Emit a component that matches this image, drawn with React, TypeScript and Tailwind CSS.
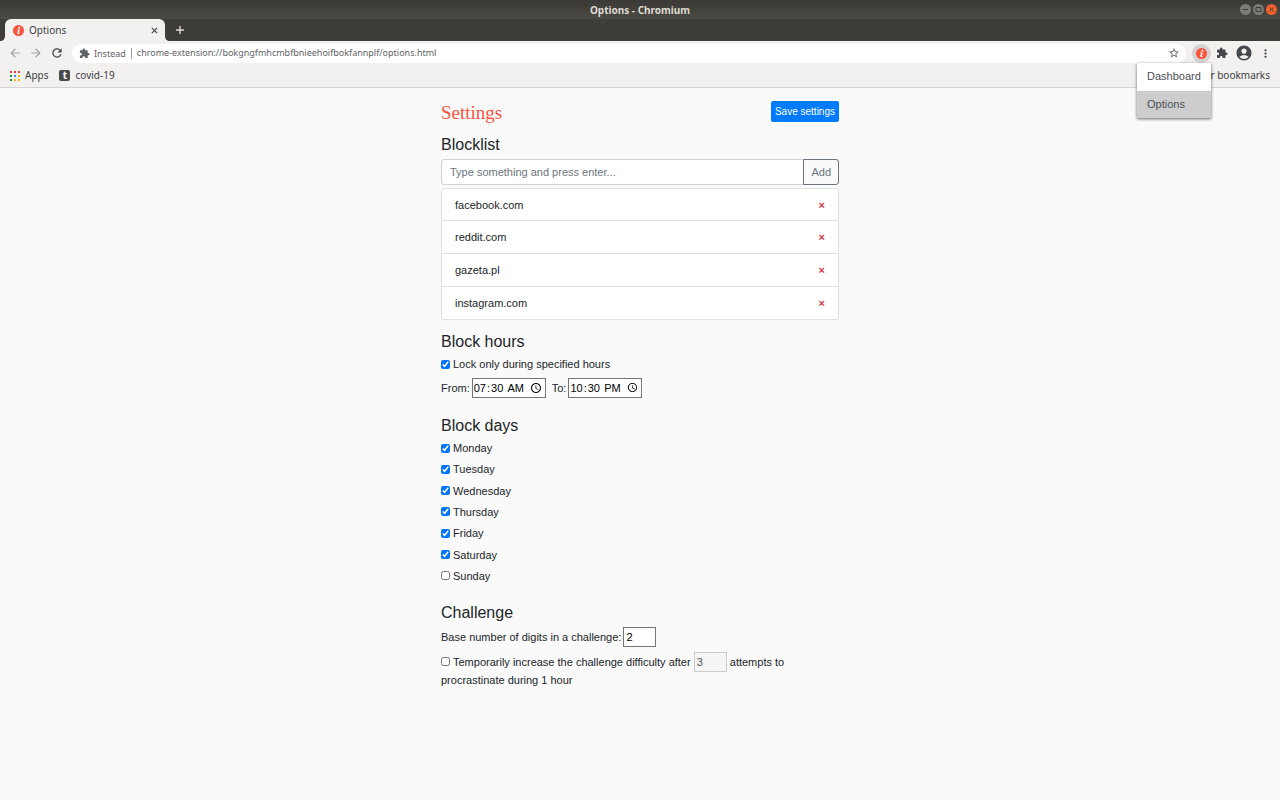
import React, { useState } from 'react';
import clsx from 'clsx';
import { MdAccountCircle, MdArrowBack, MdArrowForward, MdExtension, MdMoreVert, MdRefresh, MdStarBorder } from 'react-icons/md';

const DAYS = ['Monday', 'Tuesday', 'Wednesday', 'Thursday', 'Friday', 'Saturday', 'Sunday'];

const APP_DOTS = [
  'bg-[#ea4335]', 'bg-[#ea4335]', 'bg-[#ea4335]',
  'bg-[#1e8e3e]', 'bg-[#4285f4]', 'bg-[#fbbc05]',
  'bg-[#1e8e3e]', 'bg-[#fbbc05]', 'bg-[#fbbc05]',
];

const InsteadLogo: React.FC = () => (
  <svg viewBox="0 0 22 22" className="size-[11px] shrink-0">
    <circle cx="11" cy="11" r="11" fill="#fa5340" />
    <circle cx="12.6" cy="5.6" r="1.9" fill="#fff" />
    <path d="M8 9h5.6l-1.8 6.4c-.2.8.4.9 1.5.2l.4.8c-2.8 2.5-5.8 1.9-5.1-.7l1.2-4.7c.1-.5-.2-.8-1.8-.8z" fill="#fff" />
  </svg>
);

const TitleBar: React.FC = () => (
  <div className="relative h-[19px] bg-linear-to-b from-[#3a3935] to-[#4b4a44] flex items-center justify-center">
    <h1 className="text-[10px] leading-4 font-bold text-[#dfdbd2]">Options - Chromium</h1>
    <div className="absolute right-[3px] top-1 flex gap-[2px]">
      <button aria-label="Minimize" className="size-[11px] rounded-full bg-[#7d7b75] text-[#3c3b37]">
        <svg viewBox="0 0 11 11" className="size-[11px]" fill="none" stroke="currentColor"><path d="M3 5.5h5" /></svg>
      </button>
      <button aria-label="Maximize" className="size-[11px] rounded-full bg-[#7d7b75] text-[#3c3b37]">
        <svg viewBox="0 0 11 11" className="size-[11px]" fill="none" stroke="currentColor"><path d="M3 3.5h5v4H3z" /></svg>
      </button>
      <button aria-label="Close" className="size-[11px] rounded-full bg-[#f0602f] text-[#3c3b37]">
        <svg viewBox="0 0 11 11" className="size-[11px]" fill="none" stroke="currentColor"><path d="M3.7 3.7l3.6 3.6M7.3 3.7L3.7 7.3" /></svg>
      </button>
    </div>
  </div>
);

const TabStrip: React.FC = () => (
  <div className="h-[22px] bg-[#3d3c38] flex items-stretch">
    <svg viewBox="0 0 5 5" className="size-[5px] self-end" fill="#f2f1f0"><path d="M5 0v5H0c3 0 5-2 5-5z" /></svg>
    <div className="w-40 rounded-t-md bg-[#f2f1f0] flex items-center pl-2 pr-[7px] text-[10px] text-[#3c4043]">
      <InsteadLogo />
      <span className="ml-[5px] flex-1">Options</span>
      <button aria-label="Close tab">
        <svg viewBox="0 0 8 8" className="size-[7px]" stroke="#45474a" strokeWidth="1.4"><path d="M1 1l6 6M7 1L1 7" /></svg>
      </button>
    </div>
    <svg viewBox="0 0 5 5" className="size-[5px] self-end" fill="#f2f1f0"><path d="M0 0v5h5C2 5 0 3 0 0z" /></svg>
    <button aria-label="New tab" className="ml-[6px]">
      <svg viewBox="0 0 8 8" className="size-2" stroke="#dfdbd2" strokeWidth="1.4"><path d="M4 0v8M0 4h8" /></svg>
    </button>
  </div>
);

const ExtensionMenu: React.FC = () => (
  <div className="absolute top-[19px] right-0 w-[74px] bg-white text-[11px] text-[#4a5056] font-['Liberation_Sans',sans-serif] shadow-[0_1px_3px_rgba(0,0,0,0.6)] z-10">
    <button className="block w-full h-7 pl-[10px] text-left">Dashboard</button>
    <button className="block w-full h-[27px] pl-[10px] text-left bg-[#cdcdcd]">Options</button>
  </div>
);

const Toolbar: React.FC = () => (
  <div className="h-6 bg-[#f2f1f0] flex items-center px-2 text-[#45474a]">
    <button aria-label="Back" className="text-[#a3a3a2]"><MdArrowBack size={14} /></button>
    <button aria-label="Forward" className="ml-[7px] text-[#a3a3a2]"><MdArrowForward size={14} /></button>
    <button aria-label="Reload" className="ml-[7px]"><MdRefresh size={14} stroke="currentColor" /></button>
    <div className="ml-2 flex-1 h-[19px] rounded-full bg-white flex items-center pl-[7px] pr-[6px] text-[9px] text-[#5f6368]">
      <MdExtension size={11} className="shrink-0" />
      <span className="ml-1 pr-[5px] mr-[5px] leading-[11px] border-r border-[#9b9da0]">Instead</span>
      <input
        aria-label="Address"
        defaultValue="chrome-extension://bokgngfmhcmbfbnieehoifbokfannplf/options.html"
        className="flex-1 min-w-0 bg-transparent outline-none"
      />
      <button aria-label="Bookmark this page"><MdStarBorder size={12} /></button>
    </div>
    <div className="relative ml-[6px]">
      <button aria-label="Instead" className="size-[19px] rounded-full bg-[#d4d3d2] flex items-center justify-center">
        <InsteadLogo />
      </button>
      <ExtensionMenu />
    </div>
    <button aria-label="Extensions" className="ml-[5px]"><MdExtension size={12} /></button>
    <button aria-label="Profile" className="ml-[7px]"><MdAccountCircle size={18} /></button>
    <button aria-label="Menu" className="ml-[6px]"><MdMoreVert size={13} /></button>
  </div>
);

const BookmarksBar: React.FC = () => (
  <div className="h-[23px] bg-[#f2f1f0] border-b border-[#d3d4d6] flex items-center px-[10px] pb-px text-[10px] text-[#3c4043]">
    <a href="#apps" className="flex items-center gap-[5px]">
      <span className="grid grid-cols-3 gap-[2px]">
        {APP_DOTS.map((color, i) => <span key={i} className={clsx('size-[2px]', color)} />)}
      </span>
      Apps
    </a>
    <a href="#covid-19" className="ml-[11px] flex items-center gap-[5px]">
      <span className="size-[11px] rounded-xs bg-[#4a4a4a] text-white font-bold leading-[10px] text-center">t</span>
      covid-19
    </a>
    <a href="#other" className="ml-auto">Other bookmarks</a>
  </div>
);

const inputClass = 'h-5 bg-white border border-[#767676] text-black';
const timeClass = 'ml-[2px] w-[74px] [&::-webkit-calendar-picker-indicator]:ml-[2px]';

const App: React.FC = () => {
  const [sites, setSites] = useState(['facebook.com', 'reddit.com', 'gazeta.pl', 'instagram.com']);
  const [newSite, setNewSite] = useState('');
  const [harder, setHarder] = useState(false);

  const addSite = (e: React.FormEvent) => {
    e.preventDefault();
    if (!newSite) return;
    setSites([...sites, newSite]);
    setNewSite('');
  };

  return (
    <div className="min-h-screen bg-[#fafafa] font-['Noto_Sans',sans-serif]">
      <header>
        <TitleBar />
        <TabStrip />
        <Toolbar />
        <BookmarksBar />
      </header>

      <main className="max-w-[398px] mx-auto pt-[13px] pb-8 text-[11px] leading-4 text-[#212529] font-['Liberation_Sans',sans-serif]">
        <div className="flex items-start justify-between">
          <h2 className="text-[19px] leading-6 text-[#fa5340] font-['Liberation_Serif',serif]">Settings</h2>
          <button className="h-[21px] px-1 rounded-xs bg-[#007bff] text-[10px] text-white">Save settings</button>
        </div>

        <section className="mt-[10px]">
          <h3 className="text-base leading-[19px]">Blocklist</h3>
          <form onSubmit={addSite} className="mt-[5px] flex h-[26px]">
            <input
              aria-label="Site to block"
              value={newSite}
              onChange={(e) => setNewSite(e.target.value)}
              placeholder="Type something and press enter..."
              className="flex-1 px-2 bg-white border border-r-0 border-[#ced4da] rounded-l-[3px] outline-none placeholder:text-[#6c757d]"
            />
            <button type="submit" className="px-[7px] border border-[#6c757d] rounded-r-[3px] text-[#6c757d]">Add</button>
          </form>
          <ul className="mt-[3px] bg-white border border-[#dfdfdf] rounded-[3px] divide-y divide-[#dfdfdf]">
            {sites.map((site) => (
              <li key={site} className="h-[33px] first:h-8 last:h-8 flex items-center justify-between px-[13px]">
                {site}
                <button
                  aria-label={`Remove ${site}`}
                  onClick={() => setSites(sites.filter((s) => s !== site))}
                  className="font-bold text-[#dc3545]"
                >
                  ×
                </button>
              </li>
            ))}
          </ul>
        </section>

        <section className="mt-3">
          <h3 className="text-base leading-[19px]">Block hours</h3>
          <label className="mt-[5px] flex items-center gap-[3px]">
            <input type="checkbox" defaultChecked className="size-[9px] accent-[#0075ff]" />
            Lock only during specified hours
          </label>
          <div className="mt-[6px] flex items-center">
            <label htmlFor="from">From:</label>
            <input id="from" type="time" defaultValue="07:30" className={clsx(inputClass, timeClass)} />
            <label htmlFor="to" className="ml-[6px]">To:</label>
            <input id="to" type="time" defaultValue="22:30" className={clsx(inputClass, timeClass)} />
          </div>
        </section>

        <section className="mt-[18px]">
          <h3 className="text-base leading-[19px]">Block days</h3>
          <div className="mt-[5px] h-36 flex flex-col justify-between">
            {DAYS.map((day) => (
              <label key={day} className="flex items-center gap-[3px]">
                <input type="checkbox" defaultChecked={day !== 'Sunday'} className="size-[9px] accent-[#0075ff]" />
                {day}
              </label>
            ))}
          </div>
        </section>

        <section className="mt-[19px]">
          <h3 className="text-base leading-[19px]">Challenge</h3>
          <div className="mt-[5px] flex items-center gap-[2px]">
            <label htmlFor="digits">Base number of digits in a challenge:</label>
            <input id="digits" defaultValue="2" className={clsx(inputClass, 'w-[33px] px-[2px]')} />
          </div>
          <div className="mt-[5px]">
            <input
              id="harder"
              type="checkbox"
              checked={harder}
              onChange={(e) => setHarder(e.target.checked)}
              className="size-[9px] mr-[3px] accent-[#0075ff]"
            />
            <label htmlFor="harder">Temporarily increase the challenge difficulty after </label>
            <input
              aria-label="Attempts"
              defaultValue="3"
              disabled={!harder}
              className="h-5 w-[33px] px-[2px] border border-[#767676] bg-white text-black disabled:border-[#cbcbcb] disabled:bg-[#f5f5f5] disabled:text-[#545454]"
            />
            <label htmlFor="harder"> attempts to procrastinate during 1 hour</label>
          </div>
        </section>
      </main>
    </div>
  );
};

export default App;
